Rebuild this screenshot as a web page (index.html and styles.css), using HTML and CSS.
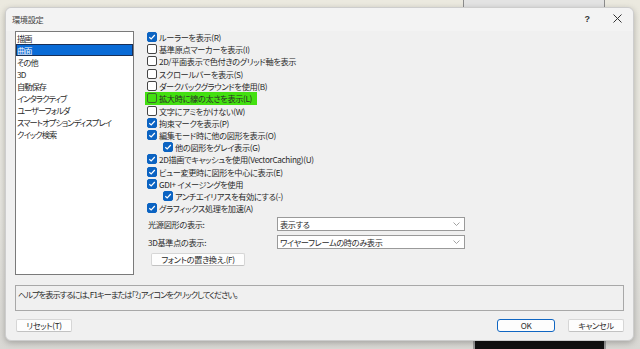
FILE: index.html
```html
<!DOCTYPE html>
<html lang="ja">
<head>
<meta charset="utf-8">
<title>環境設定</title>
<link rel="stylesheet" href="styles.css">
</head>
<body>
<div class="desk-top-panel"></div>
<div class="desk-bottom-panel"></div>
<div class="dialog">
  <div class="titlebar">
    <span class="title">環境設定</span>
    <span class="tb-help">?</span>
    <span class="tb-close"><svg width="9" height="9" viewBox="0 0 9 9"><path d="M0.5 0.5 L8.5 8.5 M8.5 0.5 L0.5 8.5" stroke="#333" stroke-width="1" fill="none"/></svg></span>
  </div>
  <div class="content">
    <div class="main">
      <ul class="cat-list">
        <li>描画</li>
        <li class="selected">曲面</li>
        <li>その他</li>
        <li>3D</li>
        <li>自動保存</li>
        <li>インタラクティブ</li>
        <li>ユーザーフォルダ</li>
        <li>スマートオプションディスプレイ</li>
        <li>クイック検索</li>
      </ul>
      <div class="options">
        <div class="checks">
          <div class="row"><span class="cb on"></span>ルーラーを表示(R)</div>
          <div class="row"><span class="cb"></span>基準原点マーカーを表示(I)</div>
          <div class="row"><span class="cb"></span>2D/平面表示で色付きのグリッド軸を表示</div>
          <div class="row"><span class="cb"></span>スクロールバーを表示(S)</div>
          <div class="row"><span class="cb"></span>ダークバックグラウンドを使用(B)</div>
          <div class="row mark"><span class="cb"></span>拡大時に線の太さを表示(L)</div>
          <div class="row"><span class="cb"></span>文字にアミをかけない(W)</div>
          <div class="row"><span class="cb on"></span>拘束マークを表示(P)</div>
          <div class="row"><span class="cb on"></span>編集モード時に他の図形を表示(O)</div>
          <div class="row sub"><span class="cb on"></span>他の図形をグレイ表示(G)</div>
          <div class="row"><span class="cb on"></span>2D描画でキャッシュを使用(VectorCaching)(U)</div>
          <div class="row"><span class="cb on"></span>ビュー変更時に図形を中心に表示(E)</div>
          <div class="row"><span class="cb on"></span>GDI+ イメージングを使用</div>
          <div class="row sub"><span class="cb on"></span>アンチエイリアスを有効にする(-)</div>
          <div class="row"><span class="cb on"></span>グラフィックス処理を加速(A)</div>
        </div>
        <div class="field">
          <span class="field-label">光源図形の表示:</span>
          <div class="select"><span>表示する</span><svg width="7" height="4" viewBox="0 0 7 4"><path d="M0.5 0.5 L3.5 3.5 L6.5 0.5" stroke="#999" stroke-width="0.9" fill="none"/></svg></div>
        </div>
        <div class="field">
          <span class="field-label">3D基準点の表示:</span>
          <div class="select"><span>ワイヤーフレームの時のみ表示</span><svg width="7" height="4" viewBox="0 0 7 4"><path d="M0.5 0.5 L3.5 3.5 L6.5 0.5" stroke="#999" stroke-width="0.9" fill="none"/></svg></div>
        </div>
        <button class="btn font-btn">フォントの置き換え.(F)</button>
      </div>
    </div>
    <div class="help">ヘルプを表示するには、F1キーまたは「?」アイコンをクリックしてください。</div>
    <div class="buttons">
      <button class="btn reset">リセット(T)</button>
      <div class="spacer"></div>
      <button class="btn ok">OK</button>
      <button class="btn cancel">キャンセル</button>
    </div>
  </div>
</div>
</body>
</html>
```
FILE: styles.css
```css
* { box-sizing: border-box; }
html, body { margin: 0; }
body {
  width: 640px;
  height: 349px;
  overflow: hidden;
  padding: 7px 0 0 5px;
  background: linear-gradient(#ebe9df 0, #e6e5df 60%, #d9d8d4 100%);
  font-family: "Noto Sans CJK JP", "Noto Sans", sans-serif;
  font-feature-settings: "palt";
  font-size: 8.2px;
  letter-spacing: -0.35px;
  color: #2b2b2b;
  position: relative;
}
.desk-top-panel {
  position: absolute;
  left: 463px; top: 0;
  width: 142px; height: 20px;
  background: #e3e3e3;
  border-left: 1px solid #8c8c8c;
  border-right: 1px solid #8c8c8c;
}
.desk-bottom-panel {
  position: absolute;
  left: 473px; top: 338px;
  width: 133px; height: 20px;
  background: #111;
  border: 2px solid #9a9a9a;
}
.dialog {
  position: relative;
  z-index: 1;
  width: 629px;
  height: 334px;
  background: #f0f0f0;
  border: 1px solid #cdcdcd;
  border-radius: 6px;
  box-shadow: 0 2px 6px rgba(0,0,0,0.25);
  display: flex;
  flex-direction: column;
}
.titlebar {
  height: 23px;
  display: flex;
  align-items: center;
  padding: 0 0 0 6px;
  background: #f3f3f3;
  border-radius: 6px 6px 0 0;
}
.title { flex: 1; color: #444; padding-bottom: 2px; }
.tb-help {
  width: 30px; text-align: center;
  font-family: "Liberation Sans", sans-serif;
  font-size: 9px; font-weight: bold; color: #333;
  padding-bottom: 2px;
}
.tb-close {
  width: 30px; height: 14px;
  display: flex; align-items: center; justify-content: center;
  margin-right: 1px;
  padding-bottom: 2px;
}
.content {
  flex: 1;
  padding: 0 9px;
  display: flex;
  flex-direction: column;
}
.main { display: flex; height: 244px; }
.cat-list {
  margin: 0;
  padding: 0;
  list-style: none;
  width: 119px;
  height: 244px;
  background: #fff;
  border: 1px solid #7a7a7a;
  letter-spacing: -0.9px;
}
.cat-list li {
  height: 12px;
  line-height: 12px;
  padding-left: 1px;
  white-space: nowrap;
}
.cat-list li.selected {
  background: #0a6bd6;
  color: #fff;
  outline: 1px solid #1a2f55;
  outline-offset: -1px;
}
.options {
  margin-left: 11px;
  display: flex;
  flex-direction: column;
}
.checks { display: flex; flex-direction: column; }
.row {
  height: 12.2px;
  display: flex;
  align-items: center;
  width: fit-content;
  padding: 0 3px 0 2px;
  white-space: nowrap;
}
.row.sub { padding-left: 18px; }
.row.mark { background: #43e010; height: 12.6px; padding-right: 5px; }
.cb {
  width: 10px; height: 10px;
  margin-right: 2px;
  border: 1px solid #444;
  border-radius: 2px;
  background: #fff;
  flex: none;
}
.cb.on {
  border-color: #0b63c2;
  background: #0b63c2 url("data:image/svg+xml,%3Csvg xmlns='http://www.w3.org/2000/svg' width='8' height='8' viewBox='0 0 8 8'%3E%3Cpath d='M1.3 4.2 L3.2 6 L6.8 2' stroke='white' stroke-width='1.2' fill='none'/%3E%3C/svg%3E") center/8px 8px no-repeat;
}
.row.mark .cb { background: transparent; border-color: #3a6a2a; }
.field {
  display: flex;
  align-items: center;
  margin-top: 3px;
}
.field + .field { margin-top: 4px; }
.field-label { width: 132px; padding-left: 3px; }
.select {
  width: 188px;
  height: 14px;
  background: #fff;
  border: 1px solid #9a9a9a;
  display: flex;
  align-items: center;
  justify-content: space-between;
  padding: 0 4px 0 2px;
}
.btn {
  font-family: inherit;
  font-feature-settings: "palt";
  font-size: 8.2px;
  letter-spacing: -0.35px;
  color: #2b2b2b;
  background: #fdfdfd;
  border: 1px solid #d6d6d6;
  border-bottom-color: #c2c2c2;
  border-radius: 2px;
  height: 13px;
  padding: 0;
  line-height: 11px;
}
.font-btn { margin: 4px 0 0 6px; width: 94px; }
.help {
  margin-top: 10px;
  height: 26px;
  border: 1px solid #a8a8a8;
  padding: 2px 2px;
  line-height: 12px;
  letter-spacing: -0.95px;
}
.buttons {
  margin-top: 8px;
  display: flex;
  padding-left: 1px;
}
.spacer { flex: 1; }
.reset { width: 56px; }
.ok { width: 58px; border: 1px solid #1066c2; border-radius: 3px; }
.cancel { width: 56px; margin-left: 13px; }
```
